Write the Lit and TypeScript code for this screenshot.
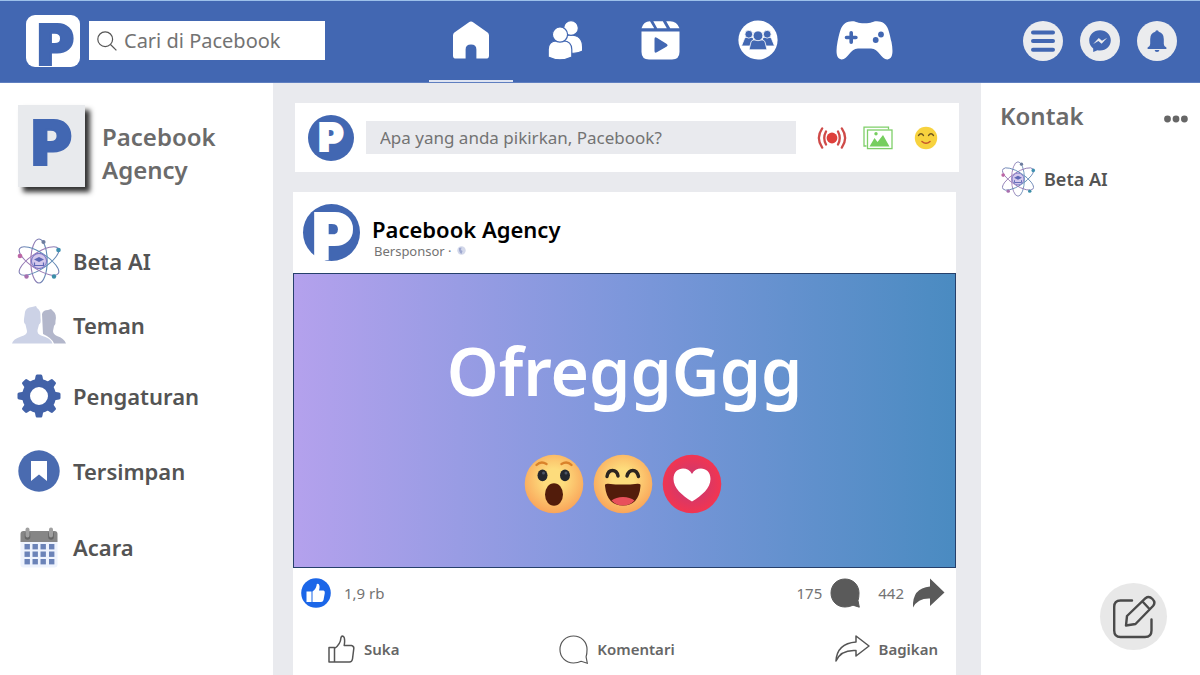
import { LitElement, html, css, svg } from "lit";
import { customElement } from "lit/decorators.js";

const homeIcon = html`<svg width="38" height="38" viewBox="0 0 38 38" aria-hidden="true">
  <path fill="#fff" d="M16.6 1.4Q19 -.4 21.4 1.4L35.6 11.6Q37 12.8 37 14.6V34.4Q37 37.6 33.8 37.6H24.4V28.4Q24.4 23.4 19 23.4T13.6 28.4V37.6H4.2Q1 37.6 1 34.4V14.6Q1 12.8 2.4 11.6Z"/>
</svg>`;

const friendsIcon = html`<svg width="35" height="40" viewBox="0 0 35 40" aria-hidden="true">
  <g fill="#fff" stroke="#4267b2" stroke-width="1.2">
    <path d="M13 33V24Q14 15 22 15Q34.6 15 34.6 27V31Q30 34 22 33Z"/>
    <circle cx="23" cy="8" r="7.4"/>
    <path d="M.2 37V29.500Q.5 21 8.500 21H15.500Q23.500 21 23.800 29.500V37Q18 39.800 12 39.800T.2 37Z"/>
    <circle cx="12" cy="14.600" r="7.600"/>
  </g>
</svg>`;

const reelsIcon = html`<svg width="39" height="40" viewBox="0 0 39 40" aria-hidden="true">
  <path fill="#fff" d="M.5 8.200Q2.500 1.400 9 1.200L13.200 8.200ZM12.300 1.200H21.800L25.800 8.200H16.200ZM25.200 1.200H29Q36 1.400 38.500 8.200H29.200Z"/>
  <path fill="#fff" fill-rule="evenodd" d="M.5 11.400H38.500V32Q38.500 39.400 31 39.400H8Q.5 39.400 .5 32ZM13.500 19V31Q13.500 33.600 15.800 32.300L25.800 26.400Q27.600 25.200 25.800 24L15.800 17.800Q13.500 16.500 13.500 19Z"/>
</svg>`;

const groupsIcon = html`<svg width="40" height="40" viewBox="0 0 40 40" aria-hidden="true">
  <circle cx="20" cy="20" r="19.600" fill="#fff"/>
  <g fill="#4267b2" stroke="#fff" stroke-width=".8">
    <path d="M3.500 26L6.500 18.600Q7.200 17.400 8.600 17.400H14Q15.500 17.400 15.500 19V26ZM36.500 26L33.500 18.600Q32.800 17.400 31.400 17.400H26Q24.500 17.400 24.500 19V26Z"/>
    <circle cx="10.800" cy="14.200" r="3.900"/><circle cx="29.200" cy="14.200" r="3.900"/>
    <path d="M11 29.800L13 22Q13.600 20 15.600 20H24.400Q26.400 20 27 22L29 29.800Z"/>
    <circle cx="20" cy="15.800" r="4.900"/>
  </g>
</svg>`;

const gamesIcon = html`<svg width="57" height="40" viewBox="0 0 57 40" aria-hidden="true">
  <path fill="#fff" d="M16 1.200C20 1 21 3.200 28.500 3.200S37 1 41 1.200C52 1.400 53 11 55.500 22C57 30 57.500 39 51.500 39.400C45 39.600 43 28.400 35 28.400H22C14 28.400 12 39.600 5.500 39.400C-.5 39 0 30 1.500 22C4 11 5 1.400 16 1.200Z"/>
  <path stroke="#4267b2" stroke-width="3.600" stroke-linecap="round" d="M15.200 12.800V22.200M10.500 17.500H19.900"/>
  <circle cx="45" cy="14.500" r="2.900" fill="#4267b2"/><circle cx="39.700" cy="20" r="2.900" fill="#4267b2"/>
</svg>`;

const menuIcon = html`<svg width="40" height="40" viewBox="0 0 40 40" aria-hidden="true">
  <path stroke="#4267b2" stroke-width="4" stroke-linecap="round" d="M10 11.500H30M10 20H30M10 28.800H30"/>
</svg>`;

const messengerIcon = html`<svg width="40" height="40" viewBox="0 0 40 40" aria-hidden="true">
  <path fill="#4267b2" d="M20 9.200C26.400 9.200 30.800 13.800 30.800 19.300S26.400 29.600 20 29.600Q18.800 29.600 17.600 29.300L13.200 31V27.400Q9.200 24.400 9.200 19.300C9.200 13.800 13.600 9.200 20 9.200Z"/>
  <path fill="#ebecee" d="M13.200 23L18.800 16.900L22 19.800L27.200 16.800L21.600 22.800L18.400 20Z"/>
</svg>`;

const bellIcon = html`<svg width="40" height="40" viewBox="0 0 40 40" aria-hidden="true">
  <path fill="#4267b2" d="M18.300 10.800Q18.400 9.200 20 9.200T21.700 10.800Q26.800 12 26.800 18V23Q26.800 25.600 29.400 26.600V28H10.600V26.600Q13.200 25.600 13.200 23V18Q13.200 12 18.300 10.800ZM17.600 29H22.400Q22.200 31 20 31T17.600 29Z"/>
</svg>`;

const searchIcon = html`<svg width="20" height="20" viewBox="0 0 20 20" aria-hidden="true">
  <g fill="none" stroke="#555" stroke-width="1.200"><circle cx="8.200" cy="8.200" r="7.400"/><path d="M13.500 13.500L19.400 19.400"/></g>
</svg>`;

const atomIcon = (size: number, id: string) => html`<svg width="${size}" height="${size}" viewBox="0 0 46 46" aria-hidden="true">
  <defs><linearGradient id="${id}" gradientUnits="userSpaceOnUse" x1="2" y1="0" x2="44" y2="0">
    <stop offset="0" stop-color="#cf6fb5"/><stop offset=".5" stop-color="#7c7fb4"/><stop offset="1" stop-color="#2ba0b8"/>
  </linearGradient></defs>
  <g fill="none" stroke="url(#${id})" stroke-width="1.100">
    <ellipse cx="23" cy="23" rx="8.200" ry="22"/>
    <ellipse cx="23" cy="23" rx="8.200" ry="23" transform="rotate(57 23 23)"/>
    <ellipse cx="23" cy="23" rx="8.200" ry="23" transform="rotate(-57 23 23)"/>
  </g>
  <circle cx="23" cy="23" r="7.600" fill="#d4c8ec" stroke="#7d78c4" stroke-width="1.200"/>
  <path fill="#5d68b5" d="M18 21.500L23 19L28 21.500L23 24Z"/>
  <path fill="none" stroke="#5d68b5" stroke-width="1.200" d="M18.500 24.500V27.500H27.500V24.500"/>
  <circle cx="27.500" cy="4" r="2.100" fill="#6d7c9e"/><circle cx="42.500" cy="12" r="2.300" fill="#3f8fb0"/>
  <circle cx="4" cy="18" r="2.300" fill="#bd66a5"/><circle cx="10.500" cy="38.500" r="2.200" fill="#a86fae"/>
  <circle cx="38" cy="38.500" r="2.200" fill="#3c8ea8"/>
</svg>`;

const peopleIcon = html`<svg width="54" height="38" viewBox="0 0 54 38" aria-hidden="true">
  <path fill="#b3b7cb" d="M30 8Q31 4 36 4L39 3L41 5Q45 8 43.500 15Q44 18 42 20L41 25Q41 28 45 30Q52 32 54 37.500H42Q40 32 31 28Z"/>
  <path fill="#ccd2e6" d="M13 6Q14 1.500 20 1L24 0L25 2Q29 4 28.500 12Q29.500 17 27 18.500L25.500 24Q25 28 29 29.500Q39 32 40.500 37.500H0Q1 33 9 30.500Q15.500 28.500 15 25L13.500 18.500Q11.500 17 12 13Z"/>
</svg>`;

const gearIcon = html`<svg width="44" height="44" viewBox="-22 -22 44 44" aria-hidden="true">
  <g fill="#4262a8">
    ${[0, 45, 90, 135, 180, 225, 270, 315].map(
      (a) => svg`<path transform="rotate(${a})" d="M-4.600 -14L-3.400 -20Q-3.200 -21.500 -2 -21.500H2Q3.200 -21.500 3.400 -20L4.600 -14Z"/>`
    )}
  </g>
  <circle r="13" fill="none" stroke="#4262a8" stroke-width="8"/>
</svg>`;

const savedIcon = html`<svg width="42" height="42" viewBox="0 0 42 42" aria-hidden="true">
  <circle cx="21" cy="21" r="20.700" fill="#4a6bb0"/>
  <path fill="#fff" d="M13 11H29V31L21 24.500L13 31Z"/>
</svg>`;

const calendarIcon = html`<svg width="38" height="42" viewBox="0 0 38 42" aria-hidden="true">
  <rect x=".5" y="12" width="37" height="29.500" rx="3" fill="#eef3fd"/>
  <path fill="#868686" d="M.5 16V8Q.5 5 3.500 5H34.500Q37.500 5 37.500 8V16Z"/>
  <path stroke="#666" stroke-width="5.600" stroke-linecap="round" d="M7.500 8V11M31 8V11"/>
  <path stroke="#a0a0a0" stroke-width="4" stroke-linecap="round" d="M7.500 3.500V9.500M31 3.500V9.500"/>
  <g fill="#6b83b8">
    ${[18, 25.5, 33].map((y) =>
      [4.5, 12.5, 20.5, 29].map((x) => svg`<rect x="${x}" y="${y}" width="5.400" height="5.400"/>`)
    )}
  </g>
</svg>`;

const liveIcon = html`<svg width="30" height="22" viewBox="0 0 30 22" aria-hidden="true">
  <circle cx="15" cy="11" r="5.400" fill="#de3f3b"/>
  <path fill="none" stroke="#cf4b49" stroke-width="2.300" stroke-linecap="round" d="M9 4.500Q5.500 11 9 17.500M5.200 1.400Q-1.500 11 5.200 20.600M21 4.500Q24.500 11 21 17.500M24.800 1.400Q31.500 11 24.800 20.600"/>
</svg>`;

const photoIcon = html`<svg width="30" height="24" viewBox="0 0 30 24" aria-hidden="true">
  <path fill="none" stroke="#7fcf69" stroke-width="1.300" d="M3.500 20H1V1.200H25.500V3.500"/>
  <rect x="4.500" y="4" width="24.500" height="18.600" fill="#fff" stroke="#7fcf69" stroke-width="1.300"/>
  <path fill="#76ce5f" d="M6.500 20.500L11.500 12L14.500 16L20 9L26.500 20.500Z"/><circle cx="13" cy="7.800" r="1.700" fill="#76ce5f"/>
</svg>`;

const smileIcon = html`<svg width="24" height="24" viewBox="0 0 24 24" aria-hidden="true">
  <circle cx="12" cy="12" r="11.200" fill="#f7d23e"/>
  <path fill="none" stroke="#6b5320" stroke-width="1.300" stroke-linecap="round" d="M4.500 9.500Q7 6 9.500 9.500M14.500 9.500Q17 6 19.500 9.500"/>
  <path fill="none" stroke="#c4562b" stroke-width="1.600" stroke-linecap="round" d="M8 15.500Q12 19 16 15.500"/>
</svg>`;

const globeIcon = html`<svg width="9" height="9" viewBox="0 0 9 9" aria-hidden="true">
  <circle cx="4.500" cy="4.500" r="4.200" fill="#d3d8ea"/><path fill="#9ea8cf" d="M2 2L4.500 1.500L4 4L5.500 5L4.500 8Q1.500 6 2 2Z"/>
</svg>`;

const faceGradient = (id: string) => svg`<defs><radialGradient id="${id}" cx=".5" cy=".42" r=".6">
  <stop offset=".3" stop-color="#fddc7c"/><stop offset="1" stop-color="#f9a258"/></radialGradient></defs>
  <circle cx="30" cy="30" r="29.300" fill="url(#${id})"/>`;

const wowIcon = html`<svg width="60" height="60" viewBox="0 0 60 60" role="img" aria-label="Wow">
  ${faceGradient("wow")}
  <path fill="none" stroke="#d9822b" stroke-width="2.400" stroke-linecap="round" d="M12.500 11Q17 6.500 22.500 10M37.500 10Q43 6.500 47.500 11"/>
  <ellipse cx="18.500" cy="21.300" rx="5" ry="5.900" fill="#23262e"/><ellipse cx="41" cy="21.300" rx="5" ry="5.900" fill="#23262e"/>
  <circle cx="19.500" cy="19" r="1.500" fill="#4b5568"/><circle cx="42" cy="19" r="1.500" fill="#4b5568"/>
  <ellipse cx="30" cy="40.500" rx="9" ry="11.200" fill="#521c0b"/>
</svg>`;

const hahaIcon = html`<svg width="60" height="60" viewBox="0 0 60 60" role="img" aria-label="Haha">
  ${faceGradient("haha")}
  <path fill="none" stroke="#2b2420" stroke-width="3.400" stroke-linecap="round" d="M14 22.500Q15 16.500 19.500 16.500T25 22M34 22Q35.500 16.500 39.800 16.500T45.500 22.500"/>
  <path fill="#521c0b" d="M12 32Q11.500 29.500 15 29.700Q30 31.500 44.500 29.700Q48 29.500 47.500 32Q46 51.500 30 51.500T12 32Z"/>
  <path fill="#e8505b" d="M18.500 46.500Q23 43 30 43T41.500 46.500Q37 51.500 30 51.500T18.500 46.500Z"/>
</svg>`;

const loveIcon = html`<svg width="60" height="60" viewBox="0 0 60 60" role="img" aria-label="Super">
  <defs><radialGradient id="love" cx=".5" cy=".5" r=".5"><stop offset=".4" stop-color="#d3386a"/><stop offset="1" stop-color="#f23551"/></radialGradient></defs>
  <circle cx="30" cy="30" r="29.300" fill="url(#love)"/>
  <path fill="#fff" d="M30 47.500C20 41.500 11.500 34 11.500 25C11.500 13 25.500 11.500 30 20C34.500 11.500 48.500 13 48.500 25C48.500 34 40 41.500 30 47.500Z"/>
</svg>`;

const likeBadge = html`<svg width="30" height="30" viewBox="0 0 30 30" aria-hidden="true">
  <circle cx="15" cy="15" r="14.800" fill="#1b66e8"/>
  <path fill="#fff" d="M5.500 13.500H10.500V24H5.500ZM11.500 13.500Q15.500 10.500 15.800 6Q18 5 18.500 8Q18.800 10 18 12.500H22.500Q24 12.800 23.800 15L22.500 22Q22 24 20 24H11.500Z"/>
</svg>`;

const likeIcon = html`<svg width="27" height="28" viewBox="0 0 27 28" aria-hidden="true">
  <path fill="none" stroke="#555" stroke-width="1.500" stroke-linejoin="round" d="M1 12.500H6.500V27H1ZM6.500 13.500Q12.500 9.500 13 2.500Q13.500 .8 15 1.200Q17.500 2.500 16.200 10.500H23.500Q26 11 25.800 13.500L24.500 24Q24 27 21.500 27H6.500"/>
</svg>`;

const bubblePath = "M15 1C7 1 1 7 1 15S7 29 15 29Q19.500 29 23 27.200L29.300 29.200L28 22.600Q29 19.500 29 15C29 7 23 1 15 1Z";
const bubbleIcon = html`<svg width="30" height="30" viewBox="0 0 30 30" aria-hidden="true"><path fill="#5a5a5a" stroke="#5a5a5a" d="${bubblePath}"/></svg>`;
const commentIcon = html`<svg width="29" height="29" viewBox="0 0 30 30" aria-hidden="true"><path fill="none" stroke="#555" stroke-width="1.200" d="${bubblePath}"/></svg>`;

const shareSolidIcon = html`<svg width="33" height="30" viewBox="0 0 33 30" aria-hidden="true"><path fill="#5a5a5a" d="M1 29.500Q0 10 18 8.500V.5L32.500 14.500L18 28V20.500Q6 20 1 29.500Z"/></svg>`;
const shareIcon = html`<svg width="35" height="28" viewBox="0 0 35 28" aria-hidden="true">
  <path fill="none" stroke="#555" stroke-width="1.500" stroke-linejoin="round" d="M1 26Q2 8.500 21 7V1L34 11L21 21V15.500Q6 14.500 1 26Z"/>
</svg>`;

const composeIcon = html`<svg width="44" height="44" viewBox="0 0 44 44" aria-hidden="true">
  <g fill="none" stroke="#4a4a4a" stroke-width="2.400" stroke-linecap="round" stroke-linejoin="round">
    <path d="M20 5.500H8.500Q2.200 5.500 2.200 12V35.500Q2.200 42 8.500 42H33Q39.500 42 39.500 35.500V24.500"/>
    <path d="M14 30.500L15 21L33.500 3.200Q37 .5 40.500 4T41 11L23.500 29ZM30.500 6.500L37.500 14"/>
  </g>
</svg>`;

const dotsIcon = html`<svg width="24" height="8" viewBox="0 0 24 8" aria-hidden="true">
  <g fill="#666"><circle cx="3.500" cy="4" r="3.400"/><circle cx="12" cy="4" r="3.400"/><circle cx="20.400" cy="4" r="3.400"/></g>
</svg>`;

const tabs = [
  { label: "Beranda", icon: homeIcon, current: true },
  { label: "Teman", icon: friendsIcon, current: false },
  { label: "Reels", icon: reelsIcon, current: false },
  { label: "Grup", icon: groupsIcon, current: false },
  { label: "Game", icon: gamesIcon, current: false },
];

const shortcuts = [
  { label: "Beta AI", icon: atomIcon(46, "atom-left"), size: "r1" },
  { label: "Teman", icon: peopleIcon, size: "r2" },
  { label: "Pengaturan", icon: gearIcon, size: "r3" },
  { label: "Tersimpan", icon: savedIcon, size: "r4" },
  { label: "Acara", icon: calendarIcon, size: "r4" },
];

@customElement("app-root")
export class AppRoot extends LitElement {
  static styles = css`
    :host {
      display: flex;
      flex-direction: column;
      min-height: 100vh;
      box-sizing: border-box;
      font-family: "Noto Sans", "Open Sans", sans-serif;
      color: #545454;
      background: #fff;
    }
    * { box-sizing: border-box; }
    svg { display: block; flex: none; }
    a { color: inherit; text-decoration: none; }
    button { border: 0; padding: 0; margin: 0; background: none; font: inherit; color: inherit; cursor: pointer; }
    h1, h2, p, ul { margin: 0; padding: 0; }
    ul { list-style: none; }

    .top {
      display: grid;
      grid-template-columns: auto 1fr auto;
      height: 83px;
      padding: 0 23px 0 26px;
      background: #4267b2;
      border-top: 1px solid #9cc0ea;
      border-bottom: 1px solid #5f7fc0;
    }
    .brand { display: flex; align-items: center; gap: 9px; padding-bottom: 2px; }
    .logo, .tile, .avatar {
      display: flex;
      justify-content: center;
      font-family: Inter, "Open Sans", sans-serif;
      font-weight: 900;
      color: #4267b2;
      -webkit-text-stroke: 2px currentColor;
      flex: none;
    }
    .logo { width: 54px; height: 52px; border-radius: 9px; background: #fff; font-size: 56px; line-height: 60px; padding-left: 5px; }
    .search { display: flex; align-items: center; gap: 7px; width: 236px; height: 39px; padding-left: 8px; background: #fff; }
    input { min-width: 0; flex: 1; border: 0; padding: 0; outline: 0; background: none; font-family: inherit; color: #545454; }
    input::placeholder { color: #737373; opacity: 1; }
    .search input { font-size: 20px; }
    .tabs { display: flex; justify-content: center; gap: 12px; padding-right: 3px; }
    .tab { display: flex; align-items: center; padding: 0 23px 1px; border-bottom: 2px solid transparent; }
    .current { border-bottom-color: #dfe5f3; }
    .tools { display: flex; align-items: center; gap: 17px; padding-bottom: 2px; }
    .round { border-radius: 50%; background: #ebecee; }

    .page { flex: 1; display: grid; grid-template-columns: 273px 1fr 219px; background: #e9eaee; }
    .side, .contacts { background: #fff; }
    .side { padding: 22px 13px 0; }
    .profile { display: flex; gap: 17px; align-items: center; padding-left: 5px; height: 82px; }
    .tile { width: 67px; height: 82px; background: #e8eaed; box-shadow: 5px 5px 5px #333; font-size: 62px; line-height: 75px; }
    .name { font-size: 24px; line-height: 33px; font-weight: 600; color: #6b6b6b; padding-top: 13px; }
    .shortcuts { padding-top: 44px; }
    .shortcut { display: grid; grid-template-columns: 52px 1fr; column-gap: 8px; align-items: center; font-size: 22px; font-weight: 600; }
    .shortcut svg { justify-self: center; }
    .r1 { height: 60px; }
    .r2 { height: 68px; }
    .r3 { height: 74px; }
    .r4 { height: 76px; }

    .feed { display: flex; flex-direction: column; gap: 20px; padding: 20px 22px 0 20px; min-width: 0; }
    .composer { display: flex; align-items: center; height: 69px; margin: 0 0 0 2px; padding: 0 21px 0 13px; background: #fff; }
    .avatar { border-radius: 50%; background: #4267b2; color: #fff; }
    .small { width: 46px; height: 46px; font-size: 38px; line-height: 44px; }
    .large { width: 57px; height: 57px; font-size: 63px; line-height: 65px; padding-left: 3px; }
    .prompt { flex: 1; height: 33px; margin: 0 21px 0 12px; padding: 0 14px; background: #e9eaee; font-size: 17px; }
    .attach { display: flex; align-items: center; gap: 16px; }
    .attach button:last-child { margin-left: 5px; }

    .post { flex: 1; display: flex; flex-direction: column; margin-right: 3px; background: #fff; }
    .author { display: flex; align-items: center; gap: 12px; height: 81px; padding-left: 10px; }
    .author h2 { font-size: 22px; line-height: 26px; font-weight: 600; color: #000; }
    .meta { display: flex; align-items: center; gap: 5px; padding-left: 2px; font-size: 13px; line-height: 18px; color: #737373; }
    .who { padding-top: 10px; }
    .banner {
      display: flex;
      flex-direction: column;
      align-items: center;
      height: 295px;
      padding-top: 48px;
      border: 1px solid #26406b;
      background: linear-gradient(90deg, #b4a1ed, #7d97db 50%, #4a8bc1);
    }
    .banner h1 { font-size: 66px; line-height: 96px; font-weight: 600; color: #fff; }
    .faces { display: flex; gap: 9px; padding: 36px 3px 0 0; }
    .counts { display: flex; align-items: center; height: 50px; padding: 0 11px 0 8px; font-size: 15px; color: #737373; }
    .likes { margin-left: 13px; flex: 1; }
    .n { margin-right: 8px; }
    .shares { margin-left: 18px; }
    .actions { display: flex; align-items: center; justify-content: space-between; height: 56px; padding: 6px 18px 0 35px; font-size: 15px; font-weight: 600; color: #666; }
    .actions button { display: flex; align-items: center; gap: 9px; }

    .contacts { display: flex; flex-direction: column; padding: 16px 12px 25px 19px; }
    .heading { display: flex; align-items: center; justify-content: space-between; color: #6b6b6b; }
    .heading h2 { font-size: 24px; line-height: 33px; font-weight: 600; }
    .heading button { padding-top: 6px; }
    .contact { display: flex; align-items: center; gap: 8px; height: 38px; margin-top: 28px; font-size: 18px; font-weight: 600; }
    .compose { display: flex; align-items: center; justify-content: center; width: 67px; height: 67px; margin: auto 21px 0 auto; background: #e8e8e8; }
  `;

  render() {
    return html`
      <header class="top">
        <div class="brand">
          <a class="logo" href="#" aria-label="Pacebook">P</a>
          <label class="search">${searchIcon}<input type="search" placeholder="Cari di Pacebook" aria-label="Cari di Pacebook" /></label>
        </div>
        <nav class="tabs">
          ${tabs.map((t) => html`<a class="tab ${t.current ? "current" : ""}" href="#" aria-label="${t.label}">${t.icon}</a>`)}
        </nav>
        <div class="tools">
          <button class="round" aria-label="Menu">${menuIcon}</button>
          <button class="round" aria-label="Messenger">${messengerIcon}</button>
          <button class="round" aria-label="Notifikasi">${bellIcon}</button>
        </div>
      </header>
      <div class="page">
        <aside class="side">
          <a class="profile" href="#"><span class="tile" aria-hidden="true">P</span><span class="name">Pacebook Agency</span></a>
          <ul class="shortcuts">
            ${shortcuts.map((s) => html`<li><a class="shortcut ${s.size}" href="#">${s.icon}<span>${s.label}</span></a></li>`)}
          </ul>
        </aside>
        <main class="feed">
          <section class="composer">
            <span class="avatar small" aria-hidden="true">P</span>
            <input class="prompt" type="text" placeholder="Apa yang anda pikirkan, Pacebook?" aria-label="Apa yang anda pikirkan, Pacebook?" />
            <div class="attach">
              <button aria-label="Siaran langsung">${liveIcon}</button>
              <button aria-label="Foto">${photoIcon}</button>
              <button aria-label="Perasaan">${smileIcon}</button>
            </div>
          </section>
          <article class="post">
            <div class="author">
              <span class="avatar large" aria-hidden="true">P</span>
              <div class="who">
                <h2>Pacebook Agency</h2>
                <p class="meta">Bersponsor · ${globeIcon}</p>
              </div>
            </div>
            <div class="banner">
              <h1>OfreggGgg</h1>
              <div class="faces">${wowIcon}${hahaIcon}${loveIcon}</div>
            </div>
            <div class="counts">
              ${likeBadge}<span class="likes">1,9 rb</span>
              <span class="n">175</span>${bubbleIcon}
              <span class="n shares">442</span>${shareSolidIcon}
            </div>
            <div class="actions">
              <button>${likeIcon}Suka</button>
              <button>${commentIcon}Komentari</button>
              <button>${shareIcon}Bagikan</button>
            </div>
          </article>
        </main>
        <aside class="contacts">
          <div class="heading"><h2>Kontak</h2><button aria-label="Opsi">${dotsIcon}</button></div>
          <a class="contact" href="#">${atomIcon(36, "atom-right")}<span>Beta AI</span></a>
          <button class="round compose" aria-label="Pesan baru">${composeIcon}</button>
        </aside>
      </div>
    `;
  }
}
